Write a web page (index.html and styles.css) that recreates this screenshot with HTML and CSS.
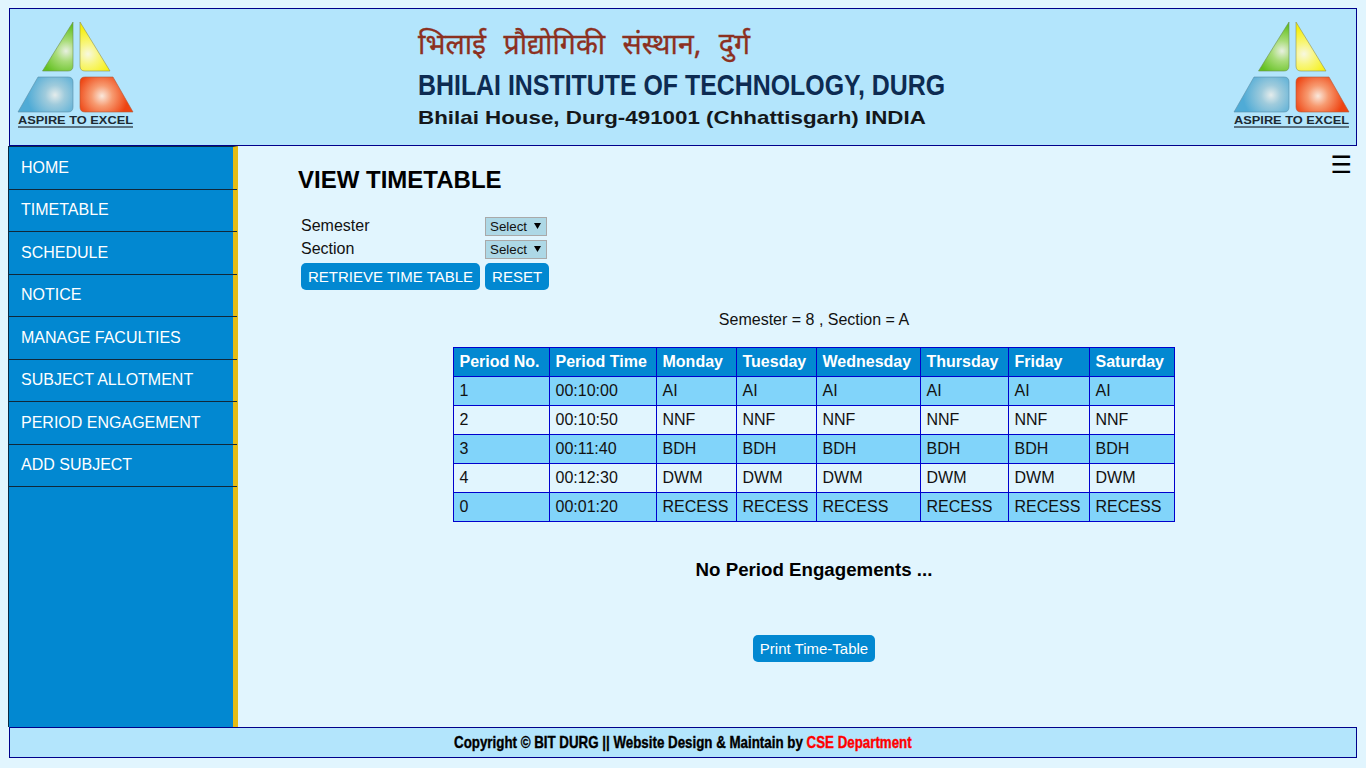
FILE: index.html
```html
<!DOCTYPE html>
<html lang="en">
<head>
    <meta charset="UTF-8">
    <meta name="viewport" content="width=device-width, initial-scale=1.0">
    <title>View Timetable</title>
    <link rel="stylesheet" href="styles.css">
</head>
<body>
    <header class="banner">
        <svg class="logo" viewBox="0 0 117 108" width="117" height="108">
            <defs>
                <radialGradient id="gGreen" gradientUnits="userSpaceOnUse" cx="49" cy="30" r="26">
                    <stop offset="0" stop-color="#e8f0e0"/><stop offset=".4" stop-color="#a8dc78"/><stop offset="1" stop-color="#62c020"/>
                </radialGradient>
                <radialGradient id="gYellow" gradientUnits="userSpaceOnUse" cx="71" cy="33" r="26">
                    <stop offset="0" stop-color="#f8f8e0"/><stop offset=".4" stop-color="#f8f680"/><stop offset="1" stop-color="#f6f010"/>
                </radialGradient>
                <radialGradient id="gBlue" gradientUnits="userSpaceOnUse" cx="38" cy="74" r="28">
                    <stop offset="0" stop-color="#e4ecec"/><stop offset=".35" stop-color="#9fcbdc"/><stop offset="1" stop-color="#4fabd6"/>
                </radialGradient>
                <radialGradient id="gOrange" gradientUnits="userSpaceOnUse" cx="85" cy="75" r="26">
                    <stop offset="0" stop-color="#fae8dc"/><stop offset=".4" stop-color="#f79a70"/><stop offset="1" stop-color="#ee4412"/>
                </radialGradient>
            </defs>
            <path d="M56 1 L25.5 50 H51 Q56 50 56 45 Z" fill="url(#gGreen)" stroke="#6d8f50" stroke-width=".6"/>
            <path d="M63 1 V45 Q63 50 68 50 H93 Z" fill="url(#gYellow)" stroke="#8f9150" stroke-width=".6"/>
            <path d="M21 56 H51 Q56 56 56 61 V86 Q56 91 51 91 H1 Z" fill="url(#gBlue)" stroke="#5b8ea8" stroke-width=".6"/>
            <path d="M63 61 Q63 56 68 56 H96 L116 91 H68 Q63 91 63 86 Z" fill="url(#gOrange)" stroke="#b05a3a" stroke-width=".6"/>
            <text class="logo-text" x="1" y="103" textLength="115" lengthAdjust="spacingAndGlyphs">ASPIRE TO EXCEL</text>
            <rect x="1" y="105" width="115" height="2" fill="#5b7484"/>
        </svg>
        <div class="banner-text">
            <div class="name-hi">भिलाई प्रौद्योगिकी संस्थान, दुर्ग</div>
            <div class="name-en">BHILAI INSTITUTE OF TECHNOLOGY, DURG</div>
            <div class="address">Bhilai House, Durg-491001 (Chhattisgarh) INDIA</div>
        </div>
        <svg class="logo" viewBox="0 0 117 108" width="117" height="108">
            <path d="M56 1 L25.5 50 H51 Q56 50 56 45 Z" fill="url(#gGreen)" stroke="#6d8f50" stroke-width=".6"/>
            <path d="M63 1 V45 Q63 50 68 50 H93 Z" fill="url(#gYellow)" stroke="#8f9150" stroke-width=".6"/>
            <path d="M21 56 H51 Q56 56 56 61 V86 Q56 91 51 91 H1 Z" fill="url(#gBlue)" stroke="#5b8ea8" stroke-width=".6"/>
            <path d="M63 61 Q63 56 68 56 H96 L116 91 H68 Q63 91 63 86 Z" fill="url(#gOrange)" stroke="#b05a3a" stroke-width=".6"/>
            <text class="logo-text" x="1" y="103" textLength="115" lengthAdjust="spacingAndGlyphs">ASPIRE TO EXCEL</text>
            <rect x="1" y="105" width="115" height="2" fill="#5b7484"/>
        </svg>
    </header>

    <div class="middle">
        <nav class="sidebar">
            <a href="#">HOME</a>
            <a href="#">TIMETABLE</a>
            <a href="#">SCHEDULE</a>
            <a href="#">NOTICE</a>
            <a href="#">MANAGE FACULTIES</a>
            <a href="#">SUBJECT ALLOTMENT</a>
            <a href="#">PERIOD ENGAGEMENT</a>
            <a href="#">ADD SUBJECT</a>
        </nav>

        <main class="content">
            <span class="menu-toggle">&#9776;</span>
            <h2>VIEW TIMETABLE</h2>

            <form class="filter-form">
                <label for="semester">Semester</label>
                <select id="semester"><option>Select</option></select>
                <label for="section">Section</label>
                <select id="section"><option>Select</option></select>
                <div class="filter-buttons">
                    <button type="button" class="btn">RETRIEVE TIME TABLE</button>
                    <button type="reset" class="btn">RESET</button>
                </div>
            </form>

            <p class="selection">Semester = 8 , Section = A</p>

            <table class="timetable">
                <thead>
                    <tr>
                        <th>Period No.</th><th>Period Time</th><th>Monday</th><th>Tuesday</th>
                        <th>Wednesday</th><th>Thursday</th><th>Friday</th><th>Saturday</th>
                    </tr>
                </thead>
                <tbody>
                    <tr><td>1</td><td>00:10:00</td><td>AI</td><td>AI</td><td>AI</td><td>AI</td><td>AI</td><td>AI</td></tr>
                    <tr><td>2</td><td>00:10:50</td><td>NNF</td><td>NNF</td><td>NNF</td><td>NNF</td><td>NNF</td><td>NNF</td></tr>
                    <tr><td>3</td><td>00:11:40</td><td>BDH</td><td>BDH</td><td>BDH</td><td>BDH</td><td>BDH</td><td>BDH</td></tr>
                    <tr><td>4</td><td>00:12:30</td><td>DWM</td><td>DWM</td><td>DWM</td><td>DWM</td><td>DWM</td><td>DWM</td></tr>
                    <tr><td>0</td><td>00:01:20</td><td>RECESS</td><td>RECESS</td><td>RECESS</td><td>RECESS</td><td>RECESS</td><td>RECESS</td></tr>
                </tbody>
            </table>

            <h3 class="no-engagements">No Period Engagements ...</h3>

            <div class="print-row">
                <button type="button" class="btn">Print Time-Table</button>
            </div>
        </main>
    </div>

    <footer class="site-footer">
        <span class="footer-text">Copyright &copy; BIT DURG || Website Design &amp; Maintain by <span class="dept">CSE Department</span></span>
    </footer>
</body>
</html>
```

FILE: styles.css
```css
body {
    font-family: "Liberation Sans", Arial, sans-serif;
    font-size: 16px;
    margin: 8px;
    background-color: #e1f5fe;
    color: #111;
}
.banner {
    display: flex;
    align-items: flex-start;
    margin: 0 1px;
    padding: 12px 6px 0 7px;
    box-sizing: border-box;
    height: 138px;
    background-color: #b3e5fc;
    border: 1px solid #00008b;
}
.logo {
    flex: none;
}
.logo-text {
    font-family: "Liberation Sans", Arial, sans-serif;
    font-weight: bold;
    font-size: 10.5px;
    fill: #1d2a33;
}
.banner-text {
    flex: 1;
    padding-left: 284px;
}
.name-hi {
    font-family: "Noto Sans", "Liberation Serif", serif;
    font-size: 28.5px;
    word-spacing: 10px;
    line-height: 44px;
    color: #8c3020;
    -webkit-text-stroke: .3px currentColor;
}
.name-en {
    margin-top: 3px;
    font-weight: bold;
    font-size: 30px;
    line-height: 34px;
    white-space: nowrap;
    color: #0d2b52;
    transform: scaleX(.83);
    transform-origin: left;
}
.address {
    margin-top: 4px;
    font-weight: bold;
    font-size: 19px;
    line-height: 24px;
    white-space: nowrap;
    color: #14171a;
    transform: scaleX(1.176);
    transform-origin: left;
}
.middle {
    display: flex;
    min-height: 581px;
}
.sidebar {
    flex: none;
    width: 224px;
    background-color: #0288d1;
    border-left: 1px solid #0a2a44;
    border-top: 1px solid #0a2a44;
    border-right: 5px solid #e6bc14;
}
.sidebar a {
    display: block;
    margin-right: -4px;
    padding: 11.75px 12px 12.25px;
    line-height: 17.5px;
    color: #fff;
    font-size: 16px;
    text-decoration: none;
    border-bottom: 1px solid #10283a;
}
.content {
    flex: 1;
    position: relative;
    padding: 0 28px 0 60px;
}
.menu-toggle {
    position: absolute;
    top: 4px;
    right: 6px;
    font-family: "DejaVu Sans", sans-serif;
    font-size: 24px;
    line-height: 30px;
    color: #000;
}
.content h2 {
    margin: 20px 0 23px;
    font-size: 24px;
    line-height: 28px;
    color: #000;
}
.filter-form {
    display: grid;
    grid-template-columns: 184px auto;
    justify-content: start;
    align-items: center;
    row-gap: 4px;
    margin-left: 3px;
}
.filter-form label {
    margin-top: -2px;
}
.filter-form select {
    appearance: none;
    width: 62px;
    height: 19px;
    padding: 0 4px;
    font-family: "Liberation Sans", Arial, sans-serif;
    font-size: 13.33px;
    background: #add8e6 url("data:image/svg+xml,%3Csvg xmlns='http://www.w3.org/2000/svg' width='8' height='6'%3E%3Cpath d='M0 0H7L3.5 6Z'/%3E%3C/svg%3E") no-repeat 48px 5px;
    border: 1px solid #a9a9a9;
    border-radius: 0;
    color: #111;
}
.filter-buttons {
    grid-column: 1 / 3;
    display: flex;
    gap: 5px;
}
.btn {
    padding: 5px 7px;
    height: 27px;
    font-family: "Liberation Sans", Arial, sans-serif;
    font-size: 15px;
    line-height: 17px;
    color: #fff;
    background-color: #0288d1;
    border: none;
    border-radius: 5px;
}
.selection {
    margin: 21px 0 18px;
    text-align: center;
    line-height: 18px;
}
.timetable {
    width: 722px;
    margin: 0 auto;
    table-layout: fixed;
    border-collapse: collapse;
    border: 1px solid #0000cd;
}
.timetable th,
.timetable td {
    padding: 5px 5px 5px 5.5px;
    line-height: 18px;
    text-align: left;
    border: 1px solid #0000cd;
    box-sizing: border-box;
}
.timetable th {
    white-space: nowrap;
    color: #fff;
    background-color: #0288d1;
}
.timetable th:nth-child(1) { width: 96px; }
.timetable th:nth-child(2) { width: 107px; }
.timetable th:nth-child(3) { width: 80px; }
.timetable th:nth-child(4) { width: 80px; }
.timetable th:nth-child(5) { width: 104px; }
.timetable th:nth-child(6) { width: 88px; }
.timetable th:nth-child(7) { width: 81px; }
.timetable th:nth-child(8) { width: 85px; }
.timetable tbody tr:nth-child(odd) {
    background-color: #81d4fa;
}
.no-engagements {
    margin: 37px 0 54px;
    text-align: center;
    font-size: 18.7px;
    line-height: 22px;
    color: #000;
}
.print-row {
    text-align: center;
}
.site-footer {
    margin: 0 1px;
    height: 29px;
    line-height: 29px;
    text-align: center;
    font-weight: bold;
    font-size: 17px;
    color: #000;
    background-color: #b3e5fc;
    border: 1px solid #00008b;
}
.footer-text {
    display: inline-block;
    white-space: nowrap;
    -webkit-text-stroke: .4px currentColor;
    transform: scaleX(.784);
}
.dept {
    color: #f00;
}
```
